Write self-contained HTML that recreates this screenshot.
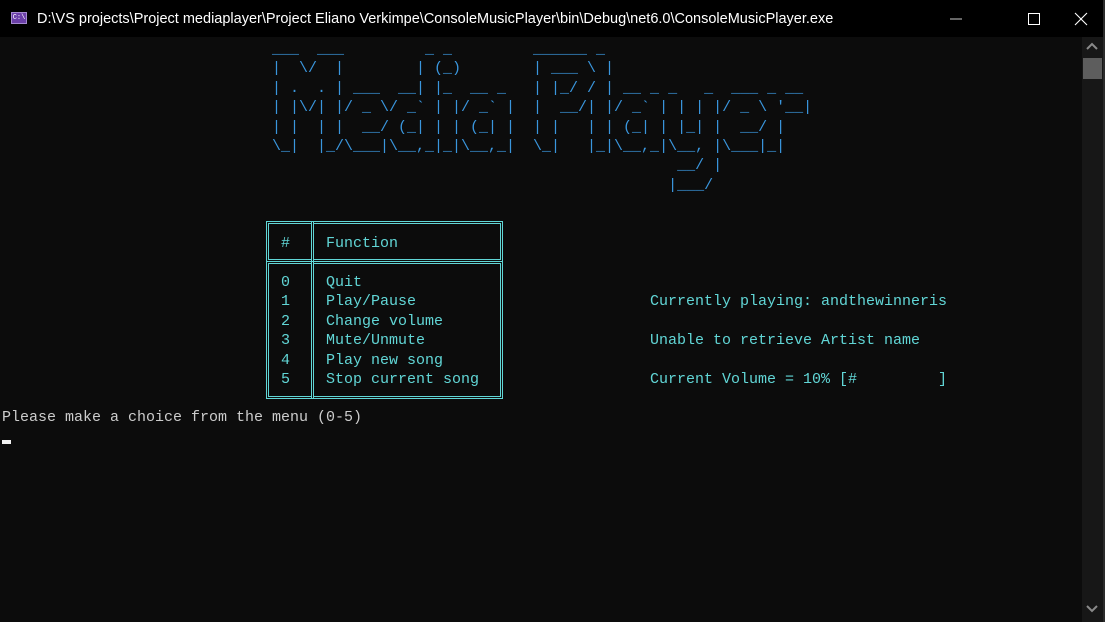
<!DOCTYPE html>
<html><head><meta charset="utf-8"><style>
html,body{margin:0;padding:0;width:1105px;height:622px;overflow:hidden;background:#0c0c0c;}
#title{position:absolute;left:0;top:0;width:1105px;height:37px;background:#000;color:#fff;font:14.5px "Liberation Sans",sans-serif;}
#title .t{position:absolute;left:37px;top:11px;white-space:nowrap;}
#icon{position:absolute;left:11px;top:12px;width:16px;height:12px;background:#6b3fa8;border:1px solid #a58ad0;box-sizing:border-box;color:#fff;font:7px "Liberation Mono",monospace;line-height:10px;text-align:center;}
pre{position:absolute;margin:0;font:15px "Liberation Mono",monospace;line-height:19.4px;white-space:pre;}
.cell{position:absolute;border:3px double #61d6d6;box-sizing:border-box;}
#sb{position:absolute;left:1082px;top:37px;width:21px;height:585px;background:#171717;}
#thumb{position:absolute;left:1083px;top:58px;width:19px;height:21px;background:#5d5d5d;}
</style></head><body>
<div id="title"><div id="icon">C:\</div><div class="t">D:\VS projects\Project mediaplayer\Project Eliano Verkimpe\ConsoleMusicPlayer\bin\Debug\net6.0\ConsoleMusicPlayer.exe</div>
<svg style="position:absolute;left:950px;top:12px" width="140" height="16">
<line x1="0" y1="7" x2="12" y2="7" stroke="#ccc" stroke-width="1"/>
<rect x="78.5" y="1.5" width="11" height="11" fill="none" stroke="#fff" stroke-width="1"/>
<path d="M137 1 L125 13 M125 1 L137 13" stroke="#fff" stroke-width="1.1"/>
</svg></div>
<pre style="left:272px;top:40px;color:#3a96dd">___  ___         _ _         ______ _
|  \/  |        | (_)        | ___ \ |
| .  . | ___  __| |_  __ _   | |_/ / | __ _ _   _  ___ _ __
| |\/| |/ _ \/ _` | |/ _` |  |  __/| |/ _` | | | |/ _ \ '__|
| |  | |  __/ (_| | | (_| |  | |   | | (_| | |_| |  __/ |
\_|  |_/\___|\__,_|_|\__,_|  \_|   |_|\__,_|\__, |\___|_|
                                             __/ |
                                            |___/</pre>
<div class="cell" style="left:266px;top:221px;width:48px;height:41px"></div>
<div class="cell" style="left:311px;top:221px;width:192px;height:41px"></div>
<div class="cell" style="left:266px;top:261px;width:48px;height:138px"></div>
<div class="cell" style="left:311px;top:261px;width:192px;height:138px"></div>
<pre style="left:281px;top:234px;color:#61d6d6">#</pre>
<pre style="left:326px;top:234px;color:#61d6d6">Function</pre>
<pre style="left:281px;top:273px;color:#61d6d6">0
1
2
3
4
5</pre>
<pre style="left:326px;top:273px;color:#61d6d6">Quit
Play/Pause
Change volume
Mute/Unmute
Play new song
Stop current song</pre>
<pre style="left:650px;top:292px;color:#61d6d6">Currently playing: andthewinneris

Unable to retrieve Artist name

Current Volume = 10% [#         ]</pre>
<pre style="left:2px;top:408px;color:#cccccc">Please make a choice from the menu (0-5)</pre>
<div style="position:absolute;left:2px;top:440px;width:9px;height:4px;background:#f2f2f2"></div>
<div id="sb"></div><div id="thumb"></div>
<svg style="position:absolute;left:1085px;top:42px" width="14" height="10"><path d="M2 7 L7 2 L12 7" fill="none" stroke="#8a8a8a" stroke-width="2"/></svg>
<svg style="position:absolute;left:1085px;top:604px" width="14" height="10"><path d="M2 2 L7 7 L12 2" fill="none" stroke="#8a8a8a" stroke-width="2"/></svg>
<div style="position:absolute;left:1103px;top:0;width:2px;height:622px;background:#2b2b2b"></div>
</body></html>
